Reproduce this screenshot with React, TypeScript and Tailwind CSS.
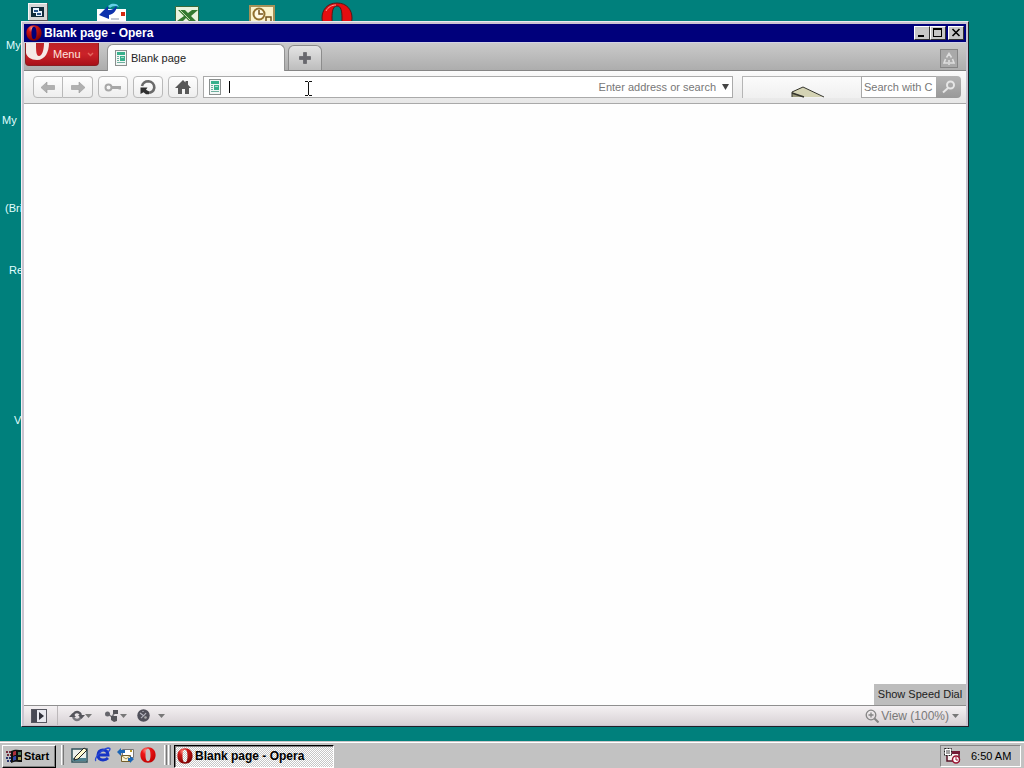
import type { ReactNode } from 'react'

const desktopLabels = [
  { text: 'My', place: 'left-[6px] top-[38px]' },
  { text: 'My', place: 'left-[2px] top-[113px]' },
  { text: '(Bri', place: 'left-[5px] top-[201px]' },
  { text: 'Re', place: 'left-[9px] top-[263px]' },
  { text: 'V', place: 'left-[14px] top-[413px]' },
]

function OperaIcon({ className, id, flat }: { className?: string; id: string; flat?: boolean }) {
  return (
    <svg viewBox="0 0 16 16" className={className} aria-hidden="true">
      <defs>
        <radialGradient id={id} cx="35%" cy="20%" r="85%">
          <stop offset="0" stopColor="#ff8a80" />
          <stop offset="0.3" stopColor={flat ? '#f01818' : '#d01818'} />
          <stop offset="1" stopColor={flat ? '#c00000' : '#780000'} />
        </radialGradient>
      </defs>
      <path
        fillRule="evenodd"
        fill={`url(#${id})`}
        d="M8 .3C12.6.3 15.6 3.5 15.6 8S12.6 15.7 8 15.7.4 12.5.4 8 3.4.3 8 .3ZM8 1.8C6.2 1.8 5.5 4.4 5.5 8s.7 6.2 2.5 6.2 2.5-2.6 2.5-6.2S9.8 1.8 8 1.8Z"
      />
    </svg>
  )
}

function PageIcon() {
  return (
    <svg viewBox="0 0 12 16" className="h-4 w-3 shrink-0" shapeRendering="crispEdges" aria-hidden="true">
      <path fill="#f2f7f5" stroke="#8a8f8e" d="M.5.5h11v15H.5z" />
      <path fill="#38b08c" d="M2 2h8v3H2zM5 6h5v5H5z" />
      <path fill="#6faf9f" d="M2 6h2v1H2zM2 8h2v1H2zM2 10h2v1H2zM2 12h8v1H2z" />
      <path fill="#a5dcca" d="M6 7h3v1H6z" />
    </svg>
  )
}

function DesktopIcons() {
  return (
    <>
      <svg viewBox="0 0 22 24" className="absolute left-[27px] top-[2px] h-6 w-[22px]" shapeRendering="crispEdges">
        <path fill="#d6d6d6" d="M1 1h19v17H1z" />
        <path fill="#555" d="M20 1h1v18H2v-1h18z" />
        <path fill="#f7f7f7" d="M1 1h19v1H1zM1 1h1v17H1z" />
        <path fill="#102b3a" d="M4 5h13v10H4z" />
        <path fill="#e8f4ff" d="M6 6h6v5H6zM9 9h6v5H9z" />
        <path fill="#27528a" d="M7 8h4v2H7zM10 11h4v2h-4z" />
      </svg>
      <svg viewBox="0 0 34 24" className="absolute left-[95px] top-[2px] h-6 w-[34px]">
        <path fill="#fff" d="M2 7h29v17H2z" />
        <path fill="#d42a12" d="M26 10h4v4h-4z" />
        <path stroke="#8996ad" d="M16 17h8" />
        <path fill="#0d32ad" d="m4 13 9-9v4c5 0 7-2 9-5 0 5-3 9-8 10v4z" />
        <path fill="#62cfe8" d="m13 4 3-2c4-1 7 0 8 3-3-2-7-1-9 1z" />
      </svg>
      <svg viewBox="0 0 26 20" className="absolute left-[174px] top-[5px] h-5 w-[26px]">
        <path fill="#e9f4df" stroke="#396a3a" d="M1.5 1.500h23v18h-23z" />
        <path fill="#347a31" d="M4 5h7l3 3 4-3h6l-7 6 5 5h-7l-3-3-3 3H3l7-5z" />
        <path stroke="#bed8aa" d="m6 5 10 10" />
      </svg>
      <svg viewBox="0 0 28 20" className="absolute left-[248px] top-[4px] h-5 w-7">
        <path fill="#faf4cc" stroke="#a69258" strokeWidth="2" d="M2 2h24v18H2z" />
        <circle cx="11" cy="10" r="5.500" fill="#fffbe4" stroke="#91712e" strokeWidth="2" />
        <path fill="none" stroke="#71531e" strokeWidth="1.500" d="M11 6v4h4M18 18v-5h5v6" />
      </svg>
      <svg viewBox="0 0 32 32" className="absolute left-[321px] top-[2px] h-8 w-8">
        <path
          fill="#e40d10"
          stroke="#521818"
          fillRule="evenodd"
          d="M16 1c10 0 15 7 15 15s-5 15-15 15S1 24 1 16 6 1 16 1Zm0 3c-4 0-5 5-5 12s1 12 5 12 5-5 5-12-1-12-5-12Z"
        />
        <path fill="none" stroke="#ff9e9a" d="M5 9c2-4 6-6 10-6" />
      </svg>
    </>
  )
}

function CaptionButton({ label, children }: { label: string; children: ReactNode }) {
  return (
    <button
      aria-label={label}
      className="h-[14px] w-4 border border-t-white border-l-white border-r-[#303030] border-b-[#303030] bg-[#c6c6c6]"
    >
      <svg viewBox="0 0 14 12" className="block h-3 w-[14px]" shapeRendering="crispEdges" fill="none" stroke="#000">
        {children}
      </svg>
    </button>
  )
}

function TitleBar() {
  return (
    <div className="flex h-[18px] shrink-0 items-center bg-[#00007b] pl-[2px] pr-[2px]">
      <OperaIcon id="title-opera" className="h-4 w-4" />
      <span className="ml-[2px] flex-1 text-[12px] font-bold text-white">Blank page - Opera</span>
      <CaptionButton label="Minimize">
        <path strokeWidth="2" d="M3 9h6" />
      </CaptionButton>
      <CaptionButton label="Maximize">
        <path d="M2.5 1.5h8v8h-8zM2 2.5h9" />
      </CaptionButton>
      <div className="ml-[2px] flex">
        <CaptionButton label="Close">
          <path strokeWidth="1.6" shapeRendering="auto" d="m3.5 2 7 7m0-7-7 7" />
        </CaptionButton>
      </div>
    </div>
  )
}

function TabBar() {
  return (
    <div className="flex h-[29px] shrink-0 border-b border-t border-b-[#858585] border-t-[#d2d2e6] bg-linear-to-b from-[#cacaca] to-[#adadad] pl-px">
      <button className="relative flex h-[23px] w-[74px] items-center overflow-hidden rounded-b-sm border border-t-0 border-[#8b1d20] bg-linear-to-b from-[#bb2327] via-[#cb2229] to-[#a91119] pl-[27px] text-[11px] text-[#ffe5df]">
        <svg viewBox="0 0 24 18" className="absolute left-0 top-0 h-[18px] w-6" aria-hidden="true">
          <path fill="#f5e9e7" d="M0 0h10c0 7 0 13 3 13S18 7 18 0h5c0 9-4 17-12 17C5 17 1 14 0 10z" />
        </svg>
        Menu
        <svg viewBox="0 0 7 5" className="ml-[6px] h-[5px] w-[7px]" fill="none" stroke="#e4665e" strokeWidth="1.4">
          <path d="m1 1 2.5 2.5L6 1" />
        </svg>
      </button>
      <button className="-mb-px ml-2 mt-px flex w-[178px] items-center rounded-t-md border border-b-0 border-[#929292] bg-[#fdfdfd] pl-[7px] text-[11px] text-[#222]">
        <PageIcon />
        <span className="ml-1">Blank page</span>
      </button>
      <button
        aria-label="New tab"
        className="ml-[3px] mt-[2px] flex w-[34px] items-center justify-center rounded-t-md border border-b-0 border-[#8c8c8c] bg-linear-to-b from-[#e4e4e4] to-[#bdbdbd]"
      >
        <svg viewBox="0 0 12 12" className="h-3 w-3">
          <path fill="#68686e" stroke="#55555b" strokeWidth=".6" d="M4.5.5h3v4h4v3h-4v4h-3v-4h-4v-3h4z" />
        </svg>
      </button>
      <div className="flex-1" />
      <button
        aria-label="Closed tabs"
        className="mr-2 mt-[6px] flex h-[19px] w-[18px] items-center justify-center border border-[#858585] bg-[#a9a9a9]"
      >
        <svg viewBox="0 0 14 14" className="h-[14px] w-[14px]" fill="none" stroke="#dedede" strokeWidth="1.6">
          <path d="m4.500 5.500 2.500-4 2.500 4M3.500 7 2 11h4M10.500 7l1.500 4H8M7 8v5" />
        </svg>
      </button>
    </div>
  )
}

function ToolButton({ label, children, shape }: { label: string; children: ReactNode; shape?: string }) {
  return (
    <button
      aria-label={label}
      className={`flex h-[22px] w-[30px] items-center justify-center border border-[#b9b9b9] bg-linear-to-b from-[#fefefe] to-[#eeeeee] ${shape ?? 'rounded'}`}
    >
      <svg viewBox="0 0 18 16" className="h-4 w-[18px]">
        {children}
      </svg>
    </button>
  )
}

function Toolbar() {
  return (
    <div className="flex h-[33px] shrink-0 items-center gap-[5px] border-b border-[#a9a9a9] bg-linear-to-b from-[#fbfbfb] to-[#e7e7e7] pl-[9px] pr-[5px]">
      <div className="flex">
        <ToolButton label="Back" shape="rounded-l">
          <path fill="#b0b0b0" stroke="#999" strokeWidth=".6" d="M2 8.500 8 3v3.500h7.500v4H8V14z" />
        </ToolButton>
        <ToolButton label="Forward" shape="rounded-r border-l-0">
          <path fill="#b0b0b0" stroke="#999" strokeWidth=".6" d="M16 8.500 10 3v3.500H2.500v4H10V14z" />
        </ToolButton>
      </div>
      <ToolButton label="Log in">
        <circle cx="4.500" cy="8.500" r="3" fill="none" stroke="#a7a7a7" strokeWidth="2" />
        <path fill="#a7a7a7" d="M7 7h10v3.500h-2.500V10H7z" />
      </ToolButton>
      <ToolButton label="Reload">
        <path fill="none" stroke="#6a6a6a" strokeWidth="2.600" d="M3 7C4 3.500 6.500 2.300 9.500 2.300 13 2.700 15.300 5.400 15.300 8.700c-.5 3-3 5-6.300 5" />
        <path fill="#303030" d="M1.500 8.500h7L7 10.800l3 1.700v2.800H7l-2.500-2-3 1.700z" />
      </ToolButton>
      <ToolButton label="Home">
        <path fill="#585858" d="m9 1 2.500 2.400V2H14v3.800L17 9h-2v6h-4v-5H8v5H4V9H1z" />
      </ToolButton>
      <div className="flex h-[22px] min-w-0 flex-1 items-center border border-[#aaaaaa] bg-white pl-[5px] pr-[3px]">
        <PageIcon />
        <span className="ml-2 h-3 w-px shrink-0 bg-black" />
        <input
          aria-label="Address"
          placeholder="Enter address or search"
          className="min-w-0 flex-1 text-right text-[11px] text-[#222] outline-none placeholder:text-[#777]"
        />
        <button aria-label="Address history" className="ml-[6px]">
          <svg viewBox="0 0 7 6" className="block h-[6px] w-[7px]">
            <path fill="#444" d="M0 0h7L3.500 6z" />
          </svg>
        </button>
      </div>
      <div className="ml-1 flex h-[22px]">
        <div className="flex w-[119px] items-end border-l border-t border-[#b5b5b5] bg-linear-to-b from-[#fbfbfb] to-[#f0f0f0]">
          <svg viewBox="0 0 34 12" className="ml-12 h-3 w-[34px]">
            <path fill="#d4d3b4" d="M1 6 12 1l20 10H14z" />
            <path fill="#99987a" d="M1 6l12 5H1z" />
            <path fill="none" stroke="#34342c" d="M1 11V6l11-5 21 10" />
            <path fill="none" stroke="#34342c" strokeWidth="1.500" d="m1 7 12 4" />
          </svg>
        </div>
        <input
          aria-label="Search"
          placeholder="Search with C"
          className="w-[75px] border border-r-0 border-[#a8a8a8] bg-white pl-[2px] text-[11px] outline-none placeholder:text-[#777]"
        />
        <button
          aria-label="Run search"
          className="flex w-[25px] items-center justify-center rounded-r bg-linear-to-b from-[#b4b4b4] to-[#999999]"
        >
          <svg viewBox="0 0 14 14" className="h-[14px] w-[14px]" fill="none" stroke="#e6e6e6" strokeWidth="2">
            <circle cx="8.500" cy="5" r="3.500" />
            <path d="m6 8-5 4.500" />
          </svg>
        </button>
      </div>
    </div>
  )
}

function DownArrow() {
  return (
    <svg viewBox="0 0 7 4" className="h-1 w-[7px]">
      <path fill="#777" d="M0 0h7L3.500 4z" />
    </svg>
  )
}

function StatusBar() {
  return (
    <div className="flex h-5 shrink-0 items-center border-t border-[#8f8f8f] bg-linear-to-b from-[#f4f1f3] to-[#d8d2d5] pl-[7px] pr-[7px]">
      <button aria-label="Panels">
        <svg viewBox="0 0 16 14" className="block h-[14px] w-4" shapeRendering="crispEdges">
          <path fill="#e9e9ef" stroke="#56565f" d="M.5.5h15v13H.5z" />
          <path fill="#484954" d="M1 1h5v12H1z" />
          <path fill="#30303a" shapeRendering="auto" d="m8 3 5 4-5 4z" />
        </svg>
      </button>
      <span className="ml-[10px] h-full w-px bg-[#bcb8ba]" />
      <button aria-label="Sync" className="ml-[11px] flex items-center">
        <svg viewBox="0 0 16 14" className="h-[14px] w-4" fill="none" strokeWidth="2.400">
          <path stroke="#55555b" d="M4 8c0-3 1.500-5 4-5 2 0 3 1 4 3" />
          <path stroke="#77777d" d="M12 6c0 3-1.500 5-4 5-2 0-3-1-4-3" />
          <path fill="#55555b" d="M0 8h7L3.500 4zM9 6h7l-3.500 4z" />
        </svg>
        <DownArrow />
      </button>
      <button aria-label="Share" className="ml-3 flex items-center">
        <svg viewBox="0 0 16 14" className="h-[14px] w-4">
          <path fill="none" stroke="#77777d" strokeWidth="1.500" d="m4 5 4 3 3-5M8 8l3 3" />
          <circle cx="3.500" cy="5" r="2.500" fill="#66666c" />
          <path fill="#55555b" d="M9 1h5v4H9zM7 7h6v5l-3 1-3-2z" />
        </svg>
        <DownArrow />
      </button>
      <button aria-label="Turbo" className="ml-[10px] flex items-center gap-2">
        <svg viewBox="0 0 13 13" className="h-[13px] w-[13px]">
          <circle cx="6.500" cy="6.500" r="6.200" fill="#50505a" />
          <path fill="none" stroke="#b4b4be" strokeWidth="1.200" d="m3 4 4 3M4 9c1-1 3-2 5-5M6 2v1" />
          <circle cx="8.500" cy="8.500" r="1.300" fill="#aaa" />
        </svg>
        <DownArrow />
      </button>
      <div className="flex-1" />
      <button className="flex items-center text-[12px] text-[#797979]">
        <svg viewBox="0 0 14 14" className="mr-[2px] h-[14px] w-[14px]" fill="none" stroke="#858585" strokeWidth="1.300">
          <circle cx="6" cy="6" r="4.800" />
          <path d="M3.500 6h5M6 3.500v5" />
          <path strokeWidth="2" d="m9.500 9.500 4 4" />
        </svg>
        <span className="mr-[3px]">View (100%)</span>
        <DownArrow />
      </button>
    </div>
  )
}

function Grip() {
  return (
    <span className="flex h-5">
      <span className="w-px bg-white" />
      <span className="w-px bg-[#c2c2c2]" />
      <span className="w-px bg-[#777]" />
    </span>
  )
}

function Taskbar() {
  return (
    <div className="flex h-[27px] shrink-0 items-center border-t border-[#c8c8c8] bg-[#c2c2c2] pl-[2px] pr-[3px] text-[11px] text-black shadow-[inset_0_1px_0_#fff]">
      <button className="mt-[2px] flex h-[23px] w-[54px] items-center border border-t-white border-l-white border-r-black border-b-black bg-[#c2c2c2] pl-[3px] font-bold shadow-[inset_-1px_-1px_0_#808080]">
        <svg viewBox="0 0 17 16" className="h-4 w-[17px]" aria-hidden="true">
          <path fill="#111" d="M5 3c4-2 7-1 11-1v12c-4 0-7-1-11 1z" />
          <path fill="#b02f3c" d="M7 4c1-1 2-1 3-1v4c-1 0-2 0-3 1z" />
          <path fill="#4a7a5d" d="M12 4h3v3h-3z" />
          <path fill="#3349aa" d="M7 9c1-1 2-1 3-1v4c-1 0-2 0-3 1z" />
          <path fill="#a89a4e" d="M12 9h3v3h-3z" />
          <path stroke="#762b3b" strokeWidth="2" strokeDasharray="2 1" d="M0 4h5M1 7h4" />
          <path stroke="#28346e" strokeWidth="2" strokeDasharray="2 1" d="M0 10h5M1 13h4" />
        </svg>
        <span className="ml-px">Start</span>
      </button>
      <div className="ml-[5px] flex items-center gap-[6px]">
        <Grip />
        <button aria-label="Show desktop" className="ml-px">
          <svg viewBox="0 0 17 16" className="block h-4 w-[17px]">
            <path fill="#e9f0ec" stroke="#31535c" strokeWidth="1.500" d="M1 2h15v13H1z" />
            <path fill="#4d8291" d="M2 11h13v3H2z" />
            <path fill="#fffbd0" stroke="#222" d="m4 10 9-9 3 2-9 9-4 1z" />
          </svg>
        </button>
        <button aria-label="Internet Explorer">
          <svg viewBox="0 0 17 16" className="block h-4 w-[17px]" fill="none">
            <path stroke="#1734c5" strokeWidth="3" d="M4 8h10c0-3-2-5-5-5S4 5 4 8s2 5 5 5c2 0 4-1 5-2" />
            <path stroke="#2949d6" strokeWidth="1.300" d="M2 14C-1 12 8 2 14 1c4 0 1 3 0 4" />
          </svg>
        </button>
        <button aria-label="Outlook Express">
          <svg viewBox="0 0 17 16" className="block h-4 w-[17px]">
            <path fill="#fff" stroke="#777" d="M5.500 2.500h11v8h-11z" />
            <path fill="#f8f3d6" stroke="#735f2c" d="M4.500 8.500h9v6h-9z" />
            <path fill="none" stroke="#a08d52" d="m5 9 4 3 4-3" />
            <path fill="#1b65b5" d="m0 5 4-4v2h4v3H4v3zM17 12l-4-3v2h-2v3h2v2z" />
            <path fill="#bc9a26" d="M13 3h2v2h-2z" />
          </svg>
        </button>
        <button aria-label="Opera">
          <OperaIcon id="launch-opera" flat className="block h-4 w-4" />
        </button>
      </div>
      <div className="ml-2 flex items-center gap-px">
        <Grip />
        <Grip />
      </div>
      <button className="ml-[3px] mt-[2px] flex h-[23px] w-[160px] items-center border border-t-black border-l-black border-r-white border-b-white bg-[repeating-conic-gradient(#ffffff_0_25%,#c6c6c6_0_50%)] bg-[length:2px_2px] pl-[2px] text-[12px] font-bold shadow-[inset_1px_1px_0_#808080]">
        <OperaIcon id="task-opera" className="h-4 w-4" />
        <span className="ml-[2px]">Blank page - Opera</span>
      </button>
      <div className="flex-1" />
      <div className="mt-[2px] flex h-[22px] w-[81px] items-center border border-t-[#858585] border-l-[#858585] border-r-white border-b-white pl-[3px]">
        <svg viewBox="0 0 17 16" className="h-4 w-[17px]" aria-hidden="true">
          <path fill="#f5eeee" stroke="#571326" strokeWidth="1.500" d="M3 13V5h12v8z" />
          <path fill="#721b35" d="M7 3h9v3H7z" />
          <path fill="#fff" stroke="#222" strokeDasharray="2 1" d="M.5.5h7v7h-7z" />
          <path stroke="#444" d="M2 3h4M2 5h4" />
          <circle cx="12" cy="11.500" r="3.500" fill="#fff" stroke="#9b1532" strokeWidth="1.500" />
          <path fill="none" stroke="#9b1532" d="M12 9v3h2" />
        </svg>
        <time className="ml-[10px] whitespace-nowrap">6:50 AM</time>
      </div>
    </div>
  )
}

export default function App() {
  return (
    <div className="flex h-screen flex-col overflow-hidden bg-[#00807c] font-['Liberation_Sans',Arial,sans-serif]">
      <div className="relative min-h-0 flex-1">
        <DesktopIcons />
        {desktopLabels.map((label) => (
          <span key={label.place} className={`absolute text-[11px] leading-[14px] text-[#e0ffff] ${label.place}`}>
            {label.text}
          </span>
        ))}
        <main className="absolute bottom-[14px] left-[21px] right-[55px] top-[21px] flex flex-col border border-t-[#e8e8f0] border-l-[#f2eff5] border-r-[#202028] border-b-[#202028] bg-[#c9c4d0] px-[2px] pb-px pt-[2px]">
          <TitleBar />
          <TabBar />
          <Toolbar />
          <section className="flex flex-1 items-end justify-end bg-[#fefefe]">
            <button className="h-[21px] w-[92px] bg-[#bdbdbd] text-[11px] text-[#1c1c1c]">Show Speed Dial</button>
          </section>
          <StatusBar />
        </main>
        <svg viewBox="0 0 7 15" className="absolute left-[305px] top-[81px] h-[15px] w-[7px]" shapeRendering="crispEdges" aria-hidden="true">
          <path fill="none" stroke="#111" d="M0 .5h3M4 .5h3M3.500 1v13M0 14.500h3M4 14.500h3" />
        </svg>
      </div>
      <Taskbar />
    </div>
  )
}
